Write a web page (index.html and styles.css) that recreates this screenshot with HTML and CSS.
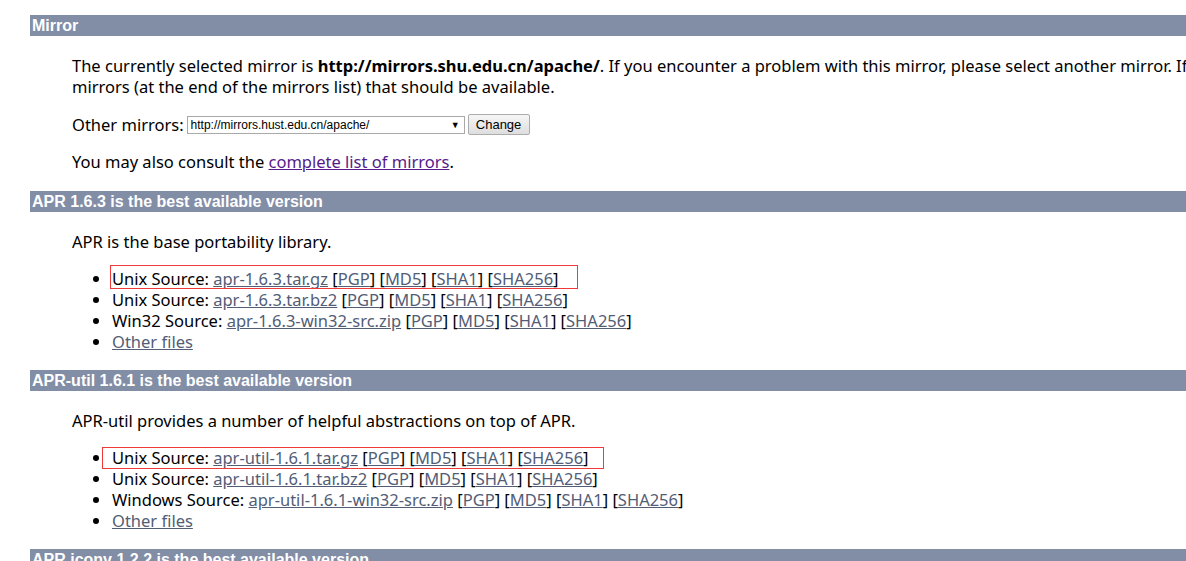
FILE: index.html
```html
<!DOCTYPE html>
<html>
<head>
<meta charset="utf-8">
<title>Apache Portable Runtime Download</title>
<link rel="stylesheet" href="styles.css">
</head>
<body>
<div class="page">
  <h2 class="bar first">Mirror</h2>
  <p>The currently selected mirror is <b>http://mirrors.shu.edu.cn/apache/</b>. If you encounter a problem with this mirror, please select another mirror. If all mirrors are failing, there are <i>backup</i><br>mirrors (at the end of the mirrors list) that should be available.</p>
  <form class="mirror-form">
    <span>Other mirrors:</span>
    <span class="select"><span class="select-text">http://mirrors.hust.edu.cn/apache/</span><span class="select-arrow">▼</span></span>
    <span class="button">Change</span>
  </form>
  <p class="last">You may also consult the <a class="visited" href="#">complete list of mirrors</a>.</p>

  <h2 class="bar">APR 1.6.3 is the best available version</h2>
  <p>APR is the base portability library.</p>
  <ul>
    <li>Unix Source: <a href="#">apr-1.6.3.tar.gz</a> [<a href="#">PGP</a>] [<a href="#">MD5</a>] [<a href="#">SHA1</a>] [<a href="#">SHA256</a>]<span class="mark mark-a"></span></li>
    <li>Unix Source: <a href="#">apr-1.6.3.tar.bz2</a> [<a href="#">PGP</a>] [<a href="#">MD5</a>] [<a href="#">SHA1</a>] [<a href="#">SHA256</a>]</li>
    <li>Win32 Source: <a href="#">apr-1.6.3-win32-src.zip</a> [<a href="#">PGP</a>] [<a href="#">MD5</a>] [<a href="#">SHA1</a>] [<a href="#">SHA256</a>]</li>
    <li><a href="#">Other files</a></li>
  </ul>

  <h2 class="bar">APR-util 1.6.1 is the best available version</h2>
  <p>APR-util provides a number of helpful abstractions on top of APR.</p>
  <ul>
    <li>Unix Source: <a href="#">apr-util-1.6.1.tar.gz</a> [<a href="#">PGP</a>] [<a href="#">MD5</a>] [<a href="#">SHA1</a>] [<a href="#">SHA256</a>]<span class="mark mark-b"></span></li>
    <li>Unix Source: <a href="#">apr-util-1.6.1.tar.bz2</a> [<a href="#">PGP</a>] [<a href="#">MD5</a>] [<a href="#">SHA1</a>] [<a href="#">SHA256</a>]</li>
    <li>Windows Source: <a href="#">apr-util-1.6.1-win32-src.zip</a> [<a href="#">PGP</a>] [<a href="#">MD5</a>] [<a href="#">SHA1</a>] [<a href="#">SHA256</a>]</li>
    <li><a href="#">Other files</a></li>
  </ul>

  <h2 class="bar">APR iconv 1.2.2 is the best available version</h2>
  <p>APR iconv is a portable implementation of the iconv() library.</p>
</div>
</body>
</html>
```
FILE: styles.css
```css
html, body {
  margin: 0;
  padding: 0;
  background: #fff;
  overflow: hidden;
}
body {
  width: 1186px;
  height: 561px;
}
.page {
  width: 1500px;
  padding: 15px 0 0 30px;
  font-family: "Noto Sans", "Open Sans", sans-serif;
  font-size: 16.5px;
  line-height: 21px;
  color: #000;
}
.bar {
  margin: 16px 0 19px;
  height: 21px;
  padding: 0 0 0 2px;
  background: #828DA6;
  color: #fff;
  font-family: "Liberation Sans", Arial, sans-serif;
  font-weight: bold;
  font-size: 16px;
  line-height: 21px;
}
.bar.first {
  margin-top: 0;
}
p {
  margin: 16px 0 16px 42px;
  white-space: nowrap;
}
p.last {
  margin-bottom: 19px;
}
ul {
  margin: 15px 0 18px 42px;
  padding-left: 40px;
}
li {
  position: relative;
  white-space: nowrap;
}
a {
  color: #525D76;
}
a.visited {
  color: #551A8B;
}
.mirror-form {
  margin: 17px 0 16px 42px;
  display: flex;
  align-items: center;
  height: 21px;
}
.select {
  display: inline-flex;
  align-items: center;
  justify-content: space-between;
  box-sizing: border-box;
  width: 278px;
  height: 18px;
  margin-left: 3px;
  padding: 0 4px 0 3px;
  border: 1px solid #a9a9a9;
  font-family: "Liberation Sans", Arial, sans-serif;
  font-size: 12px;
  line-height: 16px;
  color: #000;
}
.select-arrow {
  font-size: 9px;
}
.button {
  display: inline-flex;
  align-items: center;
  justify-content: center;
  box-sizing: border-box;
  width: 62px;
  height: 21px;
  margin-left: 3px;
  border: 1px solid #adadad;
  border-radius: 2px;
  background: linear-gradient(#f6f6f6, #dedede);
  font-family: "Liberation Sans", Arial, sans-serif;
  font-size: 13px;
  color: #000;
}
.mark {
  position: absolute;
  border: 1px solid #f03a3a;
  pointer-events: none;
}
.mark-a {
  left: -2px;
  top: -3px;
  width: 466px;
  height: 22px;
}
.mark-b {
  left: -10px;
  top: 0;
  width: 500px;
  height: 20px;
}
```
